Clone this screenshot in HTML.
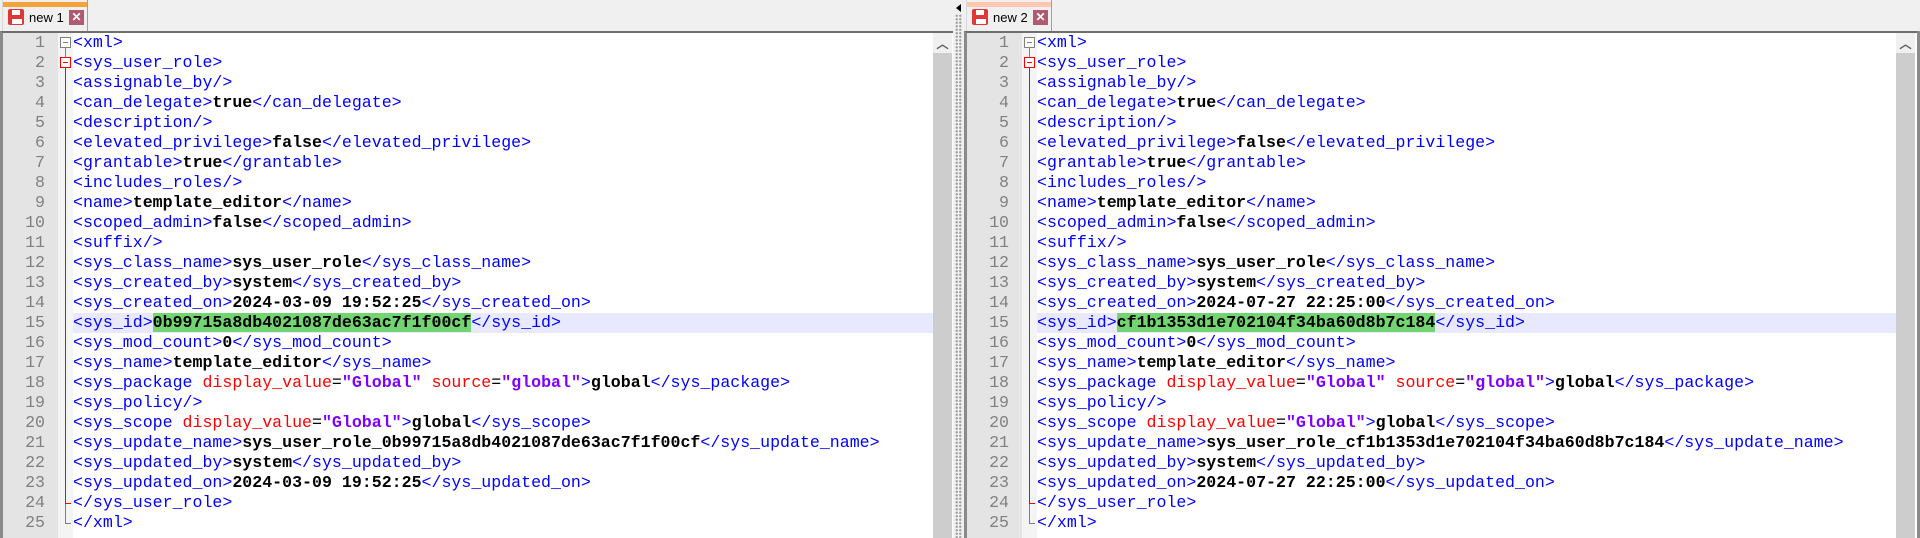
<!DOCTYPE html>
<html><head><meta charset="utf-8"><style>
*{margin:0;padding:0;box-sizing:border-box}
body{width:1920px;height:538px;background:#f0f0f0;position:relative;overflow:hidden;font-family:"Liberation Mono",monospace}
.abs{position:absolute}
.tab{position:absolute;top:0;height:33px;width:86px;background:#f0f0f0;border-right:1px solid #a0a0a0;border-left:1px solid #d8d8d8}
.tab .top{position:absolute;left:0;right:0;top:2px;height:5px}
.tab .lbl{position:absolute;left:26px;top:10px;font:13px "Liberation Sans",sans-serif;color:#000;white-space:nowrap}
.disk{position:absolute;left:5px;top:9px;width:16px;height:16px;background:#e03838;border-radius:2px}
.disk:before{content:"";position:absolute;left:4px;top:1px;width:8px;height:5px;background:#fff}
.disk:after{content:"";position:absolute;left:3px;top:9px;width:10px;height:5px;background:#fff;border:1px solid #e03838}
.x{position:absolute;left:66px;top:10px;width:15px;height:15px;background:#b05a70;color:#fff;font:bold 12px/15px "Liberation Sans",sans-serif;text-align:center}
.pane{position:absolute;top:31px;height:507px;border-top:2px solid #6e6e6e;border-left:3px solid #8a8a8a;background:#fff;overflow:hidden}
.gut{position:absolute;left:0;top:0;width:55px;height:100%;background:#e4e4e4}
.fold{position:absolute;left:55px;top:0;width:15px;height:100%;background:#f4f4f4}
.ln{position:absolute;left:0;width:42px;text-align:right;color:#808080;font-size:16.6px;line-height:20px}
.code{position:absolute;left:70px;top:0;font-size:16.6px;line-height:20px;color:#0000ff}
.code div{height:20px;white-space:pre}
.hl{position:absolute;left:70px;height:20px;background:#e8e8ff}
b{color:#000}
.a{color:#ff0000}
.v{color:#8000ff;font-weight:bold}
.k{color:#000}
.g{background:#72d572}
.sb{position:absolute;top:0;width:19px;height:100%;background:#cdcdcd}
.sb .up{position:absolute;left:0;top:0;width:19px;height:20px;background:#f0f0f0;color:#606060;font:bold 12px/22px "Liberation Sans",sans-serif;text-align:center}
.vline{position:absolute;width:1px;background:#ff0000}
.box{position:absolute;width:11px;height:11px;border:1px solid #808080;background:#fff}
.box:after{content:"";position:absolute;left:2px;top:4px;width:5px;height:1px;background:#808080}
.box.r{border-color:#ff0000}.box.r:after{background:#ff0000}
</style></head><body>

<div class="tab" style="left:2px"><div class="top" style="background:#f5a43c"></div><div class="disk"></div><div class="lbl">new 1</div><div class="x">✕</div></div>
<div class="tab" style="left:966px"><div class="top" style="background:#ffc8b0"></div><div class="disk"></div><div class="lbl">new 2</div><div class="x">✕</div></div>

<div class="abs" style="left:953px;top:0;width:13px;height:538px;background:#f0f0f0"></div>
<div class="abs" style="left:955px;top:14px;width:7px;height:524px;background-image:radial-gradient(circle,#a0a0a0 1px,transparent 1.3px);background-size:3.5px 3.5px"></div>
<div class="abs" style="left:956px;top:4px;width:0;height:0;border-top:4px solid transparent;border-bottom:4px solid transparent;border-right:5px solid #000"></div>

<div class="pane" style="left:0;width:953px">
<div class="gut"></div><div class="fold"></div>
<div class="hl" style="top:280px;width:860px"></div>
<div class="ln" style="top:0">1<br>2<br>3<br>4<br>5<br>6<br>7<br>8<br>9<br>10<br>11<br>12<br>13<br>14<br>15<br>16<br>17<br>18<br>19<br>20<br>21<br>22<br>23<br>24<br>25</div>
<div class="box" style="left:57px;top:4px"></div>
<div class="vline" style="left:62px;top:15px;height:9px;background:#808080"></div>
<div class="box r" style="left:57px;top:24px"></div>
<div class="vline" style="left:62px;top:35px;height:436px"></div>
<div class="abs" style="left:62px;top:470px;width:6px;height:1px;background:#f00"></div>
<div class="vline" style="left:62px;top:471px;height:20px;background:#808080"></div>
<div class="abs" style="left:62px;top:490px;width:6px;height:1px;background:#808080"></div>
<div class="code"><div>&lt;xml&gt;</div><div>&lt;sys_user_role&gt;</div><div>&lt;assignable_by/&gt;</div><div>&lt;can_delegate&gt;<b>true</b>&lt;/can_delegate&gt;</div><div>&lt;description/&gt;</div><div>&lt;elevated_privilege&gt;<b>false</b>&lt;/elevated_privilege&gt;</div><div>&lt;grantable&gt;<b>true</b>&lt;/grantable&gt;</div><div>&lt;includes_roles/&gt;</div><div>&lt;name&gt;<b>template_editor</b>&lt;/name&gt;</div><div>&lt;scoped_admin&gt;<b>false</b>&lt;/scoped_admin&gt;</div><div>&lt;suffix/&gt;</div><div>&lt;sys_class_name&gt;<b>sys_user_role</b>&lt;/sys_class_name&gt;</div><div>&lt;sys_created_by&gt;<b>system</b>&lt;/sys_created_by&gt;</div><div>&lt;sys_created_on&gt;<b>2024-03-09 19:52:25</b>&lt;/sys_created_on&gt;</div><div>&lt;sys_id&gt;<b class="g">0b99715a8db4021087de63ac7f1f00cf</b>&lt;/sys_id&gt;</div><div>&lt;sys_mod_count&gt;<b>0</b>&lt;/sys_mod_count&gt;</div><div>&lt;sys_name&gt;<b>template_editor</b>&lt;/sys_name&gt;</div><div>&lt;sys_package <span class="a">display_value</span><span class="k">=</span><span class="v">"Global"</span> <span class="a">source</span><span class="k">=</span><span class="v">"global"</span>&gt;<b>global</b>&lt;/sys_package&gt;</div><div>&lt;sys_policy/&gt;</div><div>&lt;sys_scope <span class="a">display_value</span><span class="k">=</span><span class="v">"Global"</span>&gt;<b>global</b>&lt;/sys_scope&gt;</div><div>&lt;sys_update_name&gt;<b>sys_user_role_0b99715a8db4021087de63ac7f1f00cf</b>&lt;/sys_update_name&gt;</div><div>&lt;sys_updated_by&gt;<b>system</b>&lt;/sys_updated_by&gt;</div><div>&lt;sys_updated_on&gt;<b>2024-03-09 19:52:25</b>&lt;/sys_updated_on&gt;</div><div>&lt;/sys_user_role&gt;</div><div>&lt;/xml&gt;</div></div>
<div class="sb" style="left:930px"><div class="up">︿</div></div>
</div>

<div class="pane" style="left:964px;width:953px;border-right:0">
<div class="gut"></div><div class="fold"></div>
<div class="hl" style="top:280px;width:860px"></div>
<div class="ln" style="top:0">1<br>2<br>3<br>4<br>5<br>6<br>7<br>8<br>9<br>10<br>11<br>12<br>13<br>14<br>15<br>16<br>17<br>18<br>19<br>20<br>21<br>22<br>23<br>24<br>25</div>
<div class="box" style="left:57px;top:4px"></div>
<div class="vline" style="left:62px;top:15px;height:9px;background:#808080"></div>
<div class="box r" style="left:57px;top:24px"></div>
<div class="vline" style="left:62px;top:35px;height:436px"></div>
<div class="abs" style="left:62px;top:470px;width:6px;height:1px;background:#f00"></div>
<div class="vline" style="left:62px;top:471px;height:20px;background:#808080"></div>
<div class="abs" style="left:62px;top:490px;width:6px;height:1px;background:#808080"></div>
<div class="code"><div>&lt;xml&gt;</div><div>&lt;sys_user_role&gt;</div><div>&lt;assignable_by/&gt;</div><div>&lt;can_delegate&gt;<b>true</b>&lt;/can_delegate&gt;</div><div>&lt;description/&gt;</div><div>&lt;elevated_privilege&gt;<b>false</b>&lt;/elevated_privilege&gt;</div><div>&lt;grantable&gt;<b>true</b>&lt;/grantable&gt;</div><div>&lt;includes_roles/&gt;</div><div>&lt;name&gt;<b>template_editor</b>&lt;/name&gt;</div><div>&lt;scoped_admin&gt;<b>false</b>&lt;/scoped_admin&gt;</div><div>&lt;suffix/&gt;</div><div>&lt;sys_class_name&gt;<b>sys_user_role</b>&lt;/sys_class_name&gt;</div><div>&lt;sys_created_by&gt;<b>system</b>&lt;/sys_created_by&gt;</div><div>&lt;sys_created_on&gt;<b>2024-07-27 22:25:00</b>&lt;/sys_created_on&gt;</div><div>&lt;sys_id&gt;<b class="g">cf1b1353d1e702104f34ba60d8b7c184</b>&lt;/sys_id&gt;</div><div>&lt;sys_mod_count&gt;<b>0</b>&lt;/sys_mod_count&gt;</div><div>&lt;sys_name&gt;<b>template_editor</b>&lt;/sys_name&gt;</div><div>&lt;sys_package <span class="a">display_value</span><span class="k">=</span><span class="v">"Global"</span> <span class="a">source</span><span class="k">=</span><span class="v">"global"</span>&gt;<b>global</b>&lt;/sys_package&gt;</div><div>&lt;sys_policy/&gt;</div><div>&lt;sys_scope <span class="a">display_value</span><span class="k">=</span><span class="v">"Global"</span>&gt;<b>global</b>&lt;/sys_scope&gt;</div><div>&lt;sys_update_name&gt;<b>sys_user_role_cf1b1353d1e702104f34ba60d8b7c184</b>&lt;/sys_update_name&gt;</div><div>&lt;sys_updated_by&gt;<b>system</b>&lt;/sys_updated_by&gt;</div><div>&lt;sys_updated_on&gt;<b>2024-07-27 22:25:00</b>&lt;/sys_updated_on&gt;</div><div>&lt;/sys_user_role&gt;</div><div>&lt;/xml&gt;</div></div>
<div class="sb" style="left:929px"><div class="up">︿</div></div>
</div>
<div class="abs" style="left:1917px;top:31px;width:3px;height:507px;background:#8a8a8a"></div>
</body></html>
